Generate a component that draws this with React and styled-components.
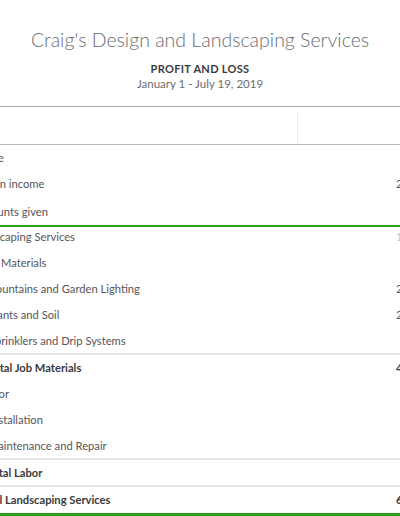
import styled, { createGlobalStyle } from 'styled-components'

const GlobalStyle = createGlobalStyle`
  html, body {
    margin: 0;
    padding: 0;
    background: #fff;
  }
  body {
    font-family: Lato, "Noto Sans", sans-serif;
  }
`

const Page = styled.div`
  width: 400px;
  height: 516px;
  overflow: hidden;
  background: #fff;
`

const Header = styled.header`
  display: flex;
  flex-direction: column;
  align-items: center;
  box-sizing: border-box;
  height: 106px;
  padding-top: 28px;
`

const Company = styled.h1`
  margin: 0;
  font-size: 19.5px;
  font-weight: 300;
  line-height: 24px;
  color: #6b6c72;
`

const ReportName = styled.h2`
  margin: 10px 0 0;
  font-size: 11px;
  font-weight: 700;
  line-height: 14px;
  letter-spacing: 0.3px;
  color: #393a3d;
`

const Period = styled.div`
  font-size: 11.5px;
  line-height: 16px;
  color: #6b6c72;
`

const Table = styled.div`
  width: 540px;
  margin-left: -40px;
  border-top: 1px solid #a9a9a9;
`

const ColumnHeader = styled.div`
  display: grid;
  grid-template-columns: 337px 1fr;
  height: 38px;
  box-sizing: border-box;
  border-bottom: 1px solid #b8b8b8;
`

const ColumnCell = styled.div`
  margin-top: 6px;
  border-left: ${p => (p.$divider ? '1px solid #ebebeb' : 'none')};
`

const Row = styled.div`
  display: grid;
  grid-template-columns: 337px 1fr;
  align-items: center;
  box-sizing: border-box;
  height: ${p => p.$h}px;
  padding-bottom: ${p => p.$lift || 0}px;
  border-top: ${p => (p.$rule ? '2px solid #e4e4e4' : 'none')};
  font-size: 11.2px;
  font-weight: ${p => (p.$total ? 700 : 400)};
  color: ${p => (p.$total ? '#393a3d' : '#55565a')};
`

const Label = styled.div`
  padding-left: ${p => p.$indent}px;
  white-space: nowrap;
`

const Amount = styled.div`
  padding-left: 99px;
  white-space: nowrap;
  color: ${p => (p.$faint ? '#c4c4c4' : 'inherit')};
`

const Accent = styled.div`
  height: ${p => p.$size}px;
  background: #2ca01c;
`

const rows = [
  { label: 'Income', indent: 8, h: 25 },
  { label: 'Design income', indent: 12, h: 27, amount: '2,250.00' },
  { label: 'Discounts given', indent: 10, h: 28 },
  { accent: 2 },
  { label: 'Landscaping Services', indent: 11, h: 22, lift: 4, amount: '1,477.50', faint: true },
  { label: 'Job Materials', indent: 21, h: 26 },
  { label: 'Fountains and Garden Lighting', indent: 30, h: 26, amount: '2,246.50' },
  { label: 'Plants and Soil', indent: 28, h: 26, amount: '2,003.50' },
  { label: 'Sprinklers and Drip Systems', indent: 29, h: 26 },
  { label: 'Total Job Materials', indent: 28, h: 27, rule: true, total: true, amount: '4,250.00' },
  { label: 'Labor', indent: 21, h: 26 },
  { label: 'Installation', indent: 29, h: 26 },
  { label: 'Maintenance and Repair', indent: 28, h: 26 },
  { label: 'Total Labor', indent: 27, h: 27, rule: true, total: true },
  { label: 'Total Landscaping Services', indent: 18, h: 28, lift: 2, rule: true, total: true, amount: '6,000.00' },
  { accent: 3 },
]

export default function App() {
  return (
    <Page>
      <GlobalStyle />
      <Header>
        <Company>Craig's Design and Landscaping Services</Company>
        <ReportName>PROFIT AND LOSS</ReportName>
        <Period>January 1 - July 19, 2019</Period>
      </Header>
      <Table>
        <ColumnHeader>
          <ColumnCell />
          <ColumnCell $divider />
        </ColumnHeader>
        {rows.map((r, i) =>
          r.accent ? (
            <Accent key={i} $size={r.accent} />
          ) : (
            <Row key={i} $h={r.h} $lift={r.lift} $rule={r.rule} $total={r.total}>
              <Label $indent={r.indent}>{r.label}</Label>
              <Amount $faint={r.faint}>{r.amount}</Amount>
            </Row>
          )
        )}
      </Table>
    </Page>
  )
}
